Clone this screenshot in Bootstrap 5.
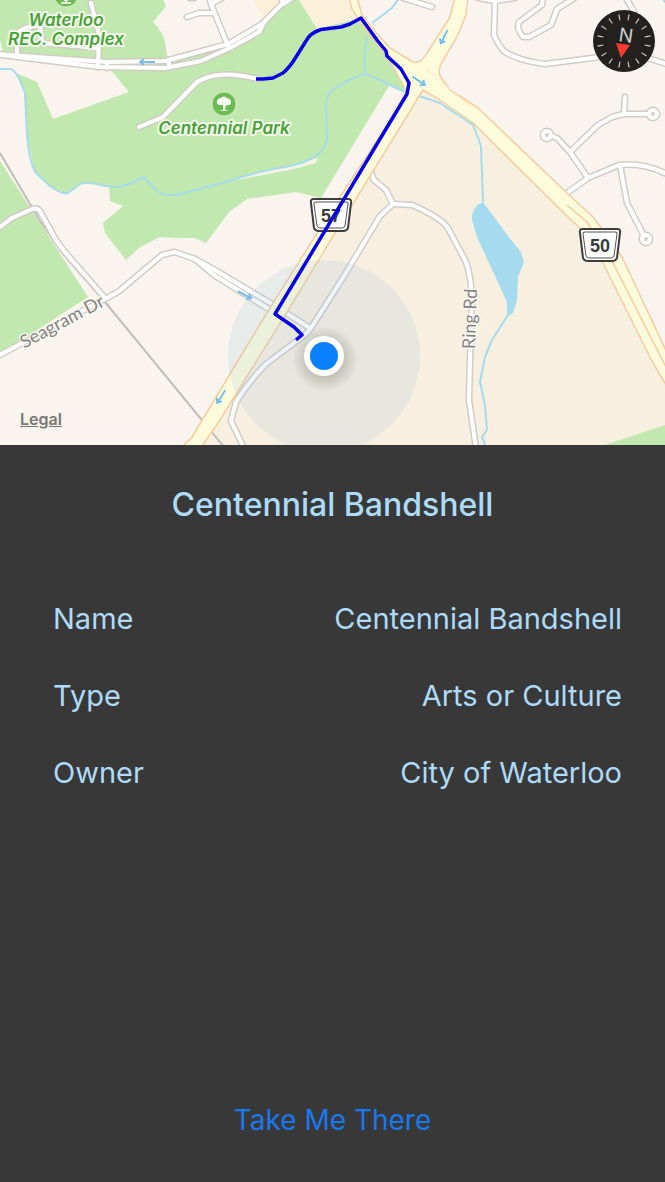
<!DOCTYPE html>
<html lang="en">
<head>
<meta charset="utf-8">
<meta name="viewport" content="width=device-width, initial-scale=1">
<title>Centennial Bandshell</title>
<link href="https://cdn.jsdelivr.net/npm/bootstrap@5.3.0/dist/css/bootstrap.min.css" rel="stylesheet">
<style>
  body { background: #383838; color: #aedbfa; font-family: Inter, "Liberation Sans", sans-serif; }
  .map-art { width: 100%; height: auto; }
  .casing, .paving { fill: none; stroke-linejoin: round; stroke-linecap: round; }
  .casing { stroke: #d3ccc6; stroke-width: 7; }
  .paving { stroke: #fff; stroke-width: 4; }
  .stream { fill: none; stroke: #a5dbec; stroke-width: 2; stroke-linejoin: round; }
  .halo { paint-order: stroke; stroke: #fbfaf4; stroke-opacity: .85; stroke-width: 4; stroke-linejoin: round; }
  .park-label { font: italic 600 17px Inter, sans-serif; fill: #48a237; text-anchor: middle; }
  .road-label { font: 400 18px Lato, sans-serif; fill: #85827f; text-anchor: middle; stroke-width: 3; }
  .shield-label { font: 700 18px "Liberation Sans", sans-serif; fill: #3b3b3b; text-anchor: middle; }
  .legal-link { left: 20px; bottom: 16px; font-size: 16px; line-height: 20px; font-weight: 600; color: #7a7672; }
  .compass { top: 9px; right: 9px; width: 64px; height: 64px; }
  .place-title { font-size: 32px; line-height: 40px; font-weight: 500; padding-top: 40px; }
  .facts { font-size: 29px; line-height: 37px; padding: 75px 43px 0 53px; }
  .facts dt, .facts dd { font-weight: 400; }
  .fact-list { gap: 40px; }
  .go-btn { font-size: 28px; line-height: 36px; color: #1a78ef; margin-bottom: 38px; }
</style>
</head>
<body>
<main class="d-flex flex-column min-vh-100">
  <section class="position-relative" aria-label="Map">
    <svg class="map-art d-block" viewBox="0 0 665 445" role="img" aria-label="Walking route to Centennial Park">
      <defs>
        <g id="streets">
          <path d="M-5 54L50 58L108 62L165 61L228 44L262 24L281 5L294-3"/>
          <path d="M-5 54L50 61L100 67L165 68L201 61L230 48L259 32L264 22"/>
          <path d="M91 3L99 35L98 67M107 62V68M98 48L42 43L40 25L25 28L17 33V57M168 61L170 67"/>
          <path d="M228 46L211 4L209-4M187 17L199 13H213M211 4L222-2M190-2H194M281-3L283 4"/>
          <path d="M139 127L163 117L197 82Q207 76 220 75Q232 73 258 79"/>
          <path d="M-4 230L12 218L30 210Q38 206 41 213L56 240L64 251L105 298"/>
          <path d="M-4 357L105 299L118 292L162 255L175 252L195 259L215 270L275 306L310 328"/>
          <path d="M195 259L214 275L272 311"/>
          <path d="M370 170L374 180L386 190L393 204L380 216L344 276L311 328Q306 335 298 340L266 364Q250 380 236 402L231 421L244 448"/>
          <path d="M393 204L412 205Q440 217 448 228L466 262Q474 285 471 320L469 400L476 448"/>
          <path d="M403-2L432 7M495 0L494 35Q500 48 505 52Q520 61 545 64L600 57L648 58L669 65M478-2L495 1L515-2"/>
          <path d="M543-3L542 5L519 22Q516 28 523 37H529L551 25L557 9L576-3M626-2L634 12"/>
          <path d="M625 97L624 114H648M624 114L612 117L598 125L570 152M552 136L557 138L570 152L588 178M560 198L588 178L619 165Q644 162 669 175M620 165L627 203L643 234"/>
          <circle cx="547" cy="135" r="4"/><circle cx="653" cy="114" r="4"/><circle cx="646" cy="239" r="4"/>
        </g>
        <path id="arrow" d="M-8 0H7M3-3L7 0L3 3" fill="none" stroke="#74c0ec" stroke-width="2"/>
        <g id="shield">
          <path d="M-17-16H17Q21-16 20-12L17 13Q16 16 12 16H-12Q-16 16-17 13L-20-12Q-21-16-17-16Z" fill="#fff" stroke="#3e3d3c" stroke-width="2"/>
          <path d="M-15-13H15Q18-13 17-11L14 11Q13 13 11 13H-11Q-13 13-14 11L-17-11Q-18-13-15-13Z" fill="#fff" stroke="#55524f" stroke-width="1"/>
        </g>
        <radialGradient id="dotShade"><stop offset=".5" stop-color="#665e50" stop-opacity=".3"/><stop offset="1" stop-color="#665e50" stop-opacity="0"/></radialGradient>
      </defs>

      <!-- land -->
      <rect width="665" height="445" fill="#f9f4ed"/>
      <path d="M403 90L425 88L440 98L473 120L585 230L605 262L665 380V445H197L285 310Z" fill="#f7efe0"/>
      <path d="M253 0H352L361 18L317 29L299 0L285 1L262 18Z" fill="#fbf0da"/>
      <g fill="#c1e8ae">
        <path d="M0 0H163L166 6L153 22Q163 32 165 42L168 62L230 47L262 24L292 0H299L317 29L361 18L408 85L402 92L389 86L321 198L296 192L247 199L229 212L206 243L195 238H180L160 237L140 247L126 260L105 233L103 223L123 206L110 201L109 187L83 183L64 194L50 186L34 170L27 135L25 93L16 73L37 82L53 119L129 92L109 68L0 55Z"/>
        <path d="M0 161L88 297L0 354Z"/>
        <path d="M605 445L665 425V445Z"/>
      </g>
      <path d="M0 40V56H4Z" fill="#f9f4ed"/>
      <path d="M220 183L318 158L316 163L290 170Z" fill="#f6f3e6"/>

      <!-- water -->
      <path class="stream" d="M0 69H10Q17 70 25 93L27 135Q29 160 35 172L50 186Q62 195 68 193L80 184Q90 181 105 186L120 187L132 183L144 177L157 191Q167 197 180 194L230 181Q250 173 290 166Q323 159 327 140L326 102Q327 91 340 86Q352 77 366 74L404 91L440 103L473 125L481 146L483 202"/>
      <path class="stream" d="M366 74L364 60L367 37M372 23L392 8L399-2M508 315L492 340L485 357L480 382L485 405L487 430L482 437L486 447"/>
      <path d="M483 202Q471 207 472 220L477 237L507 302V317L513 313L517 300L518 277L524 262L521 252L505 232L494 217Z" fill="#a5dbee"/>
      <circle cx="666" cy="0" r="3" fill="#a5dbee"/>

      <!-- railway -->
      <path d="M0 153L40 221L63 254L105 302L224 447" fill="none" stroke="#c1bdb8" stroke-width="2"/>

      <g class="casing"><use href="#streets"/></g>
      <g class="paving"><use href="#streets"/></g>

      <!-- highways -->
      <g stroke="#f5cd9e" stroke-width="1.5" fill="#fdfbdc" stroke-linejoin="round">
        <path d="M349-3L352 9L366 30L380 47L392 65L408 94L338 200L273 303L230 374L192 437L180 449H200L220 420L287 312L335 233L423 90L440 100L473 123L568 217L582 230L603 263L653 363L668 388V355L622 257L603 230L593 217L567 193L478 108L450 90L440 76Q438 69 442 62L457 37L466 15L468-3H455L450 17L427 53Q421 64 413 62L390 48L378 35L362 15L357-3Z"/>
        <path d="M567 205L587 222L598 241L613 263L668 371" fill="none"/>
      </g>
      <path d="M427 70L470 106" stroke="#fbeccb" fill="none"/>

      <use href="#arrow" transform="translate(147 62) rotate(180)"/>
      <use href="#arrow" transform="translate(444 37) rotate(117)"/>
      <use href="#arrow" transform="translate(419 81) rotate(34)"/>
      <use href="#arrow" transform="translate(245 295) rotate(28)"/>
      <use href="#arrow" transform="translate(221 397) rotate(122)"/>

      <!-- labels -->
      <g class="park-label halo">
        <text x="66" y="26">Waterloo</text>
        <text x="66" y="45">REC. Complex</text>
        <text x="224" y="134">Centennial Park</text>
      </g>
      <text class="road-label halo" transform="translate(65 327) rotate(-28)">Seagram Dr</text>
      <text class="road-label halo" transform="translate(476 319) rotate(-88)">Ring Rd</text>
      <g stroke="#fff" stroke-opacity=".6">
        <circle cx="66" cy="-5" r="12" fill="#6bbd52"/>
        <circle cx="224" cy="104" r="12" fill="#6bbd52"/>
      </g>
      <path d="M66-6V3M61 3H71M62-2L66 1L70-2" stroke="#fff" stroke-width="1.5" fill="none"/>
      <path d="M223 105L220 105Q216 104 217 101Q218 98 221 98Q224 95 227 98Q231 99 231 102Q231 106 226 105L225 110L229 111H219L223 110Z" fill="#fff"/>

      <use href="#shield" x="331" y="215"/>
      <text class="shield-label" x="331" y="222">57</text>
      <use href="#shield" x="600" y="245"/>
      <text class="shield-label" x="600" y="252">50</text>

      <!-- current position and route -->
      <circle cx="324" cy="356" r="96" fill="#8cb9dc" fill-opacity=".15"/>
      <path d="M256 79L263 79L273 78L283 73Q290 67 296 57L306 41Q310 33 321 29.500L341 27L350 24L361 18L377 40L386 51L387 56L401 69L409 83L407 94L275 314L294 327L302 335L296 340" fill="none" stroke="#0800e2" stroke-width="3.500" stroke-linejoin="round"/>
      <circle cx="325" cy="359" r="33" fill="url(#dotShade)"/>
      <circle cx="324" cy="356" r="20" fill="#fff"/>
      <circle cx="324" cy="356" r="14" fill="#0b80fc"/>
    </svg>

    <button type="button" class="compass btn p-0 border-0 rounded-circle position-absolute" aria-label="Reset map to north">
      <svg class="d-block" viewBox="-32 -32 64 64" width="64" height="64">
        <circle r="31" fill="#222120"/>
        <circle r="24" fill="none" stroke="#d4d2d0" stroke-width="6" pathLength="160" stroke-dasharray="1.200 8.800" stroke-dashoffset="-4.400"/>
        <text transform="translate(1 1) rotate(8)" text-anchor="middle" font-size="19" fill="#cfcfcf">N</text>
        <path d="M-8 2L6 4L-3 17Z" fill="#fc3b30"/>
      </svg>
    </button>
    <a href="#legal" class="legal-link position-absolute">Legal</a>
  </section>

  <h1 class="place-title text-center mb-0">Centennial Bandshell</h1>

  <dl class="facts fact-list d-flex flex-column mb-5">
    <div class="d-flex justify-content-between"><dt>Name</dt><dd class="mb-0 text-end">Centennial Bandshell</dd></div>
    <div class="d-flex justify-content-between"><dt>Type</dt><dd class="mb-0 text-end">Arts or Culture</dd></div>
    <div class="d-flex justify-content-between"><dt>Owner</dt><dd class="mb-0 text-end">City of Waterloo</dd></div>
  </dl>

  <button type="button" class="go-btn btn border-0 mt-auto align-self-center">Take Me There</button>
</main>
<script src="https://cdn.jsdelivr.net/npm/bootstrap@5.3.0/dist/js/bootstrap.bundle.min.js"></script>
</body>
</html>
